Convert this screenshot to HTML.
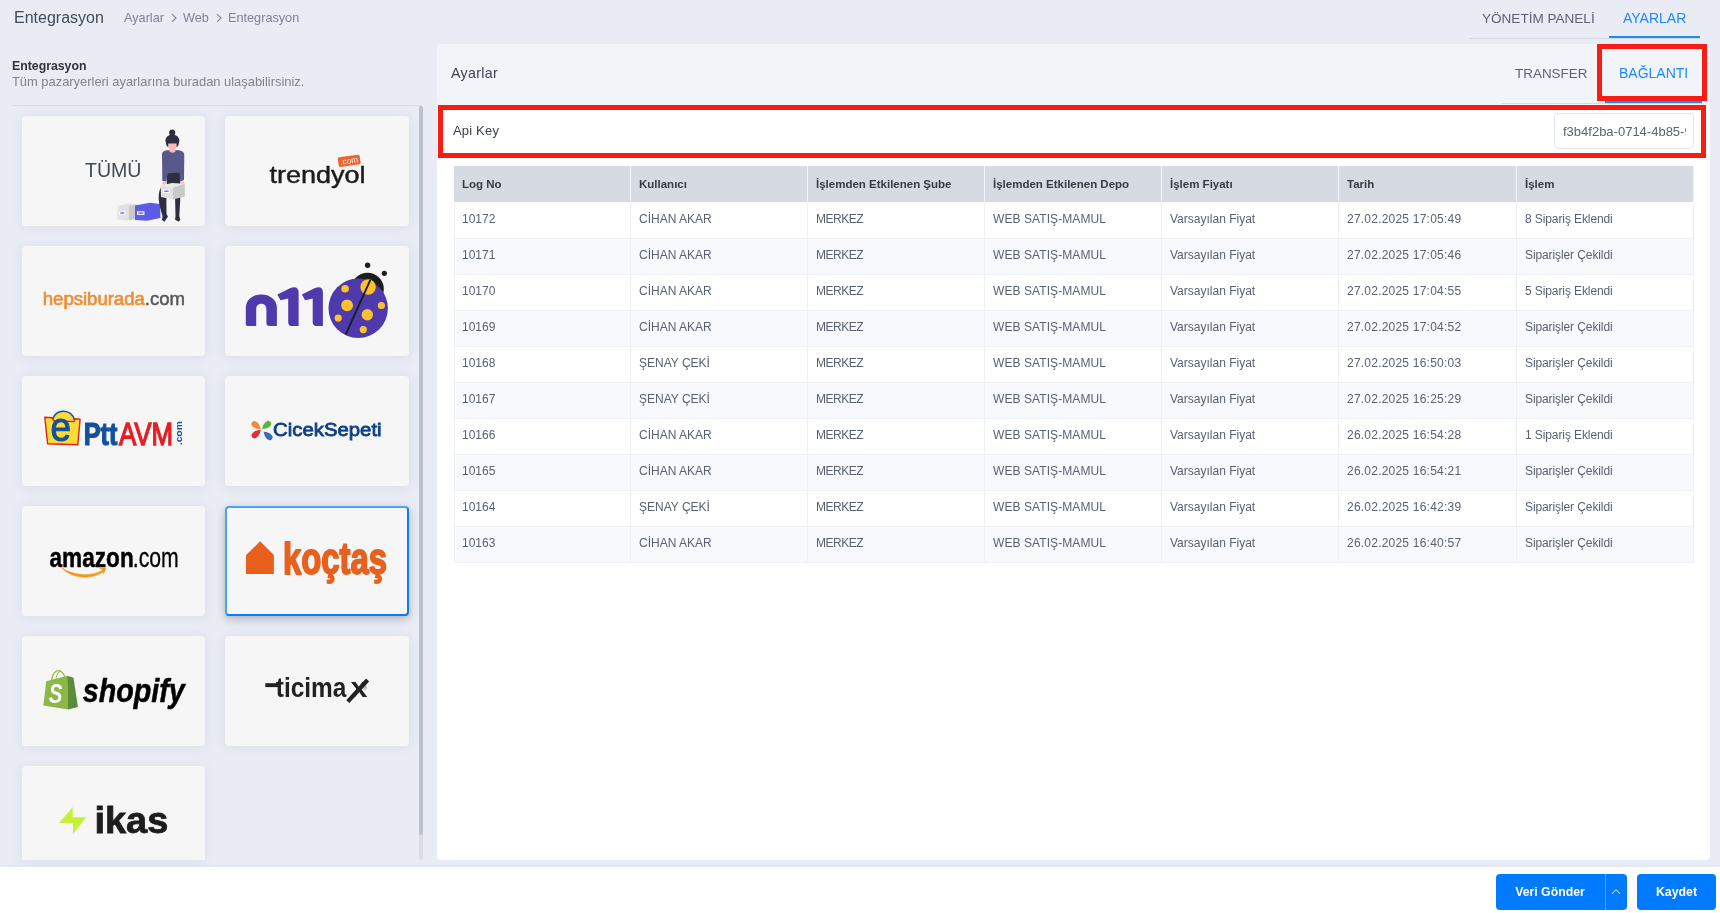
<!DOCTYPE html>
<html lang="tr">
<head>
<meta charset="utf-8">
<title>Entegrasyon</title>
<style>
*{box-sizing:border-box;margin:0;padding:0}
html,body{width:1720px;height:913px;overflow:hidden}
body{background:#e9ecf4;font-family:"Liberation Sans",sans-serif;color:#3f4254;position:relative}
.abs{position:absolute}
.t{position:absolute;white-space:nowrap;line-height:1}
/* top bar */
#title{left:14px;top:10.4px;font-size:16px;color:#414b5a}
.bc{font-size:12.7px;color:#7e8299;top:11.7px}
.toptab{font-size:14px;top:11px;color:#5e6278}
/* left */
.card{position:absolute;width:183px;height:110px;background:#f6f6f6;border-radius:4px;box-shadow:0 1px 12px rgba(150,160,190,.2)}
.card.sel{border:2px solid;border-color:#4ba1fc #0a7cf8 #0a7cf8 #4ba1fc;box-shadow:0 3px 8px rgba(50,55,70,.32)}
/* right panel */
#panel{left:437px;top:44px;width:1273px;height:816px;background:#fff;border-radius:4px;overflow:hidden}
#phead{left:0;top:0;width:1273px;height:61px;background:#f1f4f8}
.red{position:absolute;border:5px solid #f91c14}
table{position:absolute;left:454px;top:166px;width:1240px;border-collapse:separate;border-spacing:0;table-layout:fixed;font-size:12px}
th{height:37px;background:#d6dae2;color:#363b46;font-weight:bold;text-align:left;padding:0 0 0 8px;border-right:1px solid #f1f3f7;border-bottom:1px solid #fff;font-size:11.5px}
td{height:36px;color:#5a6270;padding:0 0 3px 8px;border-right:1px solid #eff2f5;border-bottom:1px solid #eff2f5}
td:first-child{border-left:1px solid #eff2f5;padding-left:7px}
tr:nth-child(odd) td{background:#f8f9fc}
td:nth-child(3){letter-spacing:-.5px}
td:nth-child(6){letter-spacing:.22px}
td:nth-child(7){letter-spacing:-.1px}
td:nth-child(4){letter-spacing:.08px}
/* footer */
#footer{left:0;top:867px;box-shadow:0 -1px 4px rgba(100,110,140,.06);width:1720px;height:46px;background:#fff}
.btn{position:absolute;top:874px;height:36px;background:#007bff;color:#fff;font-weight:bold;font-size:12.3px;border-radius:4px;text-align:center;line-height:37.4px}
</style>
</head>
<body>
<div id="root" style="position:absolute;left:0;top:0;width:1720px;height:913px;will-change:transform">
<!-- TOPBAR -->
<div class="t" id="title">Entegrasyon</div>
<div class="t bc" style="left:124px">Ayarlar</div>
<svg class="abs" style="left:170px;top:12px" width="8" height="12" viewBox="0 0 8 12"><path d="M2,2.2 L6,6 L2,9.8" fill="none" stroke="#7e8299" stroke-width="1.1"/></svg>
<div class="t bc" style="left:183px">Web</div>
<svg class="abs" style="left:215px;top:12px" width="8" height="12" viewBox="0 0 8 12"><path d="M2,2.2 L6,6 L2,9.8" fill="none" stroke="#7e8299" stroke-width="1.1"/></svg>
<div class="t bc" style="left:228px">Entegrasyon</div>
<div class="t toptab" style="left:1482px;font-size:13.55px;margin-top:.6px">YÖNETİM PANELİ</div>
<div class="t toptab" style="left:1623px;color:#1e88ff">AYARLAR</div>
<div class="abs" style="left:1469px;top:38px;width:231px;height:1px;background:#d5d9e3"></div>
<div class="abs" style="left:1609px;top:36px;width:91px;height:2px;background:#1e88ff"></div>
<!-- LEFT -->
<div class="t" style="left:12px;top:60px;font-size:12.3px;color:#2f3440;font-weight:bold">Entegrasyon</div>
<div class="t" style="left:12px;top:76px;font-size:12.9px;color:#80838f">Tüm pazaryerleri ayarlarına buradan ulaşabilirsiniz.</div>
<div class="abs" style="left:12px;top:105px;width:410px;height:1px;background:#d9dde7"></div>
<div id="cards">
<div class="card" style="left:22px;top:116px" id="c1"><svg width="184" height="110" viewBox="0 0 184 110" style="position:absolute;left:0;top:0;overflow:hidden"><text x="63" y="60.7" font-family="Liberation Sans, sans-serif" font-size="19.5" fill="#3d4b57" textLength="56.5" lengthAdjust="spacingAndGlyphs">TÜMÜ</text><g><!-- ground boxes --><polygon points="95.5,90.0 106.0,87.3 115.0,88.5 115.0,102.5 105.0,104.5 95.5,103.5" fill="#e2e2e2"/><polygon points="107.0,90.0 115.0,88.5 115.0,102.5 107.0,104.3" fill="#c9c9c9"/><polygon points="113.0,89.5 128.0,86.8 138.0,88.0 138.5,102.0 125.0,104.8 113.0,104.0" fill="#5c5ce6"/><rect x="97" y="95.30000000000001" width="6.5" height="3.4" fill="#fff"/><rect x="98.3" y="96.30000000000001" width="4" height="1.4" fill="#6c63ff"/><rect x="115" y="95.30000000000001" width="7.5" height="3.6" fill="#fff"/><rect x="116.30000000000001" y="96.4" width="5" height="1.5" fill="#6c63ff"/><!-- legs --><path d="M138.5,72.0 C135.0,80.0 137.0,89.0 140.5,100.0 L140.0,104.0 L142.5,105.8 L146.0,100.5 L144.5,98.0 C144.5,89.0 144.0,82.0 145.0,74.0 Z" fill="#2f2e41"/><path d="M153.0,79.0 L153.5,100.0 L153.0,103.5 L156.5,105.8 L158.3,104.0 L157.3,100.0 L158.5,79.0 Z" fill="#2f2e41"/><!-- skirt --><path d="M145.2,56.0 L158.0,56.0 L158.3,68.0 L144.8,68.0 Z" fill="#2f2e41"/><!-- sweater --><path d="M140.0,38.0 C140.0,35.0 144.0,34.3 147.5,34.0 L154.0,34.0 C158.0,34.3 162.3,35.0 162.3,39.0 L162.0,64.0 L158.3,65.5 L157.6,56.8 L145.4,57.2 L144.5,65.5 L140.3,65.0 Z" fill="#575a89"/><!-- hands --><ellipse cx="142.3" cy="67.30000000000001" rx="2" ry="1.8" fill="#ffb9b9"/><ellipse cx="160.5" cy="67" rx="2" ry="1.8" fill="#ffb9b9"/><!-- held box --><polygon points="138.6,69.5 150.0,67.0 162.7,67.8 151.0,71.5" fill="#e9e9e9"/><polygon points="138.6,69.5 151.0,71.5 151.0,83.5 139.0,81.0" fill="#e2e2e2"/><polygon points="151.0,71.5 162.7,67.8 163.0,80.5 151.0,83.5" fill="#c9c9c9"/><rect x="141" y="73.5" width="7" height="3.4" fill="#fff"/><rect x="142.3" y="74.5" width="4.3" height="1.4" fill="#6c63ff"/><!-- neck/face --><path d="M148.0,31.0 L152.8,31.0 L153.6,35.0 C152.5,37.3 148.3,37.3 147.2,35.0 Z" fill="#ffb9b9"/><ellipse cx="150.4" cy="24.599999999999994" rx="7" ry="6.1" fill="#2f2e41"/><path d="M144.2,25.0 L156.6,25.0 C157.0,28.0 156.3,30.0 155.3,30.8 L145.5,30.8 C144.4,30.0 143.8,28.0 144.2,25.0 Z" fill="#2f2e41"/><path d="M146.2,27.6 L154.6,27.6 L154.6,30.0 C154.6,35.0 146.2,35.0 146.2,30.0 Z" fill="#ffb9b9"/><circle cx="150.2" cy="16.69999999999999" r="3.1" fill="#2f2e41"/></g></svg></div>
<div class="card" style="left:225px;width:184px;top:116px" id="c2"><svg width="184" height="110" viewBox="0 0 184 110" style="position:absolute;left:0;top:0;overflow:hidden"><text x="44.4" y="66.7" font-family="Liberation Sans, sans-serif" font-size="24.3" fill="#1c1c1c" stroke="#1c1c1c" stroke-width="0.45" textLength="96.2" lengthAdjust="spacingAndGlyphs">trendyol</text><g transform="rotate(-8 124.2 44.8)"><rect x="113.2" y="40" width="22" height="9.6" rx="1.5" fill="#f0622b"/><text x="115" y="47.6" font-family="Liberation Sans, sans-serif" font-size="8.5" fill="#fff" textLength="18" lengthAdjust="spacingAndGlyphs">.com</text></g></svg></div>
<div class="card" style="left:22px;top:246px" id="c3"><svg width="184" height="110" viewBox="0 0 184 110" style="position:absolute;left:0;top:0;overflow:hidden"><text x="20.8" y="58.8" font-family="Liberation Sans, sans-serif" font-size="18.6" textLength="142.2" lengthAdjust="spacing"><tspan fill="#f28b30" stroke="#f28b30" stroke-width="0.6">hepsiburada</tspan><tspan fill="#58595b" stroke="#58595b" stroke-width="0.5">.com</tspan></text></svg></div>
<div class="card" style="left:225px;width:184px;top:246px" id="c4"><svg width="184" height="110" viewBox="0 0 184 110" style="position:absolute;left:0;top:0;overflow:hidden"><circle cx="142.6" cy="19.3" r="2.7" fill="#1d1d1b"/><circle cx="159.3" cy="27.3" r="2.6" fill="#1d1d1b"/><circle cx="142.5" cy="43" r="16.3" fill="#1d1d1b"/><circle cx="133.2" cy="62.3" r="29.7" fill="#4f3aad"/><g fill="#fdc12d"><circle cx="143.1" cy="41" r="7.7"/><circle cx="120.1" cy="42.7" r="3.8"/><circle cx="122.1" cy="59.3" r="5.9"/><circle cx="156.4" cy="59.5" r="3.6"/><circle cx="142.3" cy="68.8" r="5.7"/><circle cx="113.2" cy="72.1" r="3.6"/><circle cx="138.3" cy="83.6" r="3.6"/></g><line x1="145.4" y1="33.8" x2="120.8" y2="88.3" stroke="#1d1d1b" stroke-width="1.9"/><g fill="#4f3aad"><path d="M20.8,78 L20.8,62 C20.8,44 51.9,44 51.9,62 L51.9,80 L44.5,80 C42,80 41.4,78.5 41.4,76.5 L41.4,63 C41.4,56 31.2,56 31.2,63 L31.2,80 L24,80 C21.5,80 20.8,79.5 20.8,78 Z"/><path d="M52.3,48.5 L65.5,42 C70,40.3 73.6,41.5 73.6,46 L73.6,80 L67,80 C64,80 63.2,78 63.2,75.5 L63.2,52.5 L55.5,54.3 Z"/><path d="M76.9,48.5 L90,42 C94.5,40.3 97.9,41.5 97.9,46 L97.9,80 L91.5,80 C88.5,80 87.7,78 87.7,75.5 L87.7,52.5 L80.1,54.3 Z"/></g></svg></div>
<div class="card" style="left:22px;top:376px" id="c5"><svg width="184" height="110" viewBox="0 0 184 110" style="position:absolute;left:0;top:0;overflow:hidden"><path d="M31,43 C33,32.5 50,32.5 52.3,44" fill="#fbdc36" stroke="#14509f" stroke-width="1.7"/><polygon points="22.8,41.2 30.5,41.8 31.5,44.5 52,45.5 53,42.8 58.1,43.1 55.8,68.7 25.6,67.7" fill="#fbdc36" stroke="#e0201f" stroke-width="1.4" stroke-linejoin="round"/><path d="M31.8,43.5 C34,34.5 49.5,34.5 51.6,44.6 Z" fill="#fbdc36"/><text x="28.6" y="65" font-family="Liberation Sans, sans-serif" font-size="40" fill="#14509f" stroke="#14509f" stroke-width="1.1" textLength="20.5" lengthAdjust="spacingAndGlyphs">e</text><text x="61.8" y="68.8" font-family="Liberation Sans, sans-serif" font-size="32" font-weight="bold" fill="#14509f" stroke="#14509f" stroke-width="1.2" textLength="33.6" lengthAdjust="spacingAndGlyphs">Ptt</text><text x="97" y="68.8" font-family="Liberation Sans, sans-serif" font-size="30.6" fill="#e21f26" stroke="#e21f26" stroke-width="1.3" textLength="54.2" lengthAdjust="spacingAndGlyphs">AVM</text><text transform="translate(159.6 69.2) rotate(-90)" font-family="Liberation Sans, sans-serif" font-size="8.8" font-weight="bold" fill="#14509f" textLength="24" lengthAdjust="spacingAndGlyphs">.com</text></svg></div>
<div class="card" style="left:225px;width:184px;top:376px" id="c6"><svg width="184" height="110" viewBox="0 0 184 110" style="position:absolute;left:0;top:0;overflow:hidden"><path transform="translate(36.4 53.6) rotate(129)" d="M0,0.8 C2.4,3.8 3.3,6.5 3,9.2 C2.7,12.8 -2.7,12.8 -3,9.2 C-3.3,6.5 -2.4,3.8 0,0.8 Z" fill="#f08c3c"/><path transform="translate(36.4 53.6) rotate(-130)" d="M0,0.8 C2.4,3.8 3.3,6.5 3,9.2 C2.7,12.8 -2.7,12.8 -3,9.2 C-3.3,6.5 -2.4,3.8 0,0.8 Z" fill="#5cb245"/><path transform="translate(36.4 53.6) rotate(50)" d="M0,0.8 C2.4,3.8 3.3,6.5 3,9.2 C2.7,12.8 -2.7,12.8 -3,9.2 C-3.3,6.5 -2.4,3.8 0,0.8 Z" fill="#df2f3b"/><path transform="translate(38.0 55.2) rotate(-48)" d="M0,0.8 C2.4,3.8 3.3,6.5 3,9.2 C2.7,12.8 -2.7,12.8 -3,9.2 C-3.3,6.5 -2.4,3.8 0,0.8 Z" fill="#3b6db4"/><text x="48" y="60.1" font-family="Liberation Sans, sans-serif" font-size="18.8" fill="#0c3f86" stroke="#0c3f86" stroke-width="0.8" textLength="108.6" lengthAdjust="spacingAndGlyphs">CicekSepeti</text></svg></div>
<div class="card" style="left:22px;top:506px" id="c7"><svg width="184" height="110" viewBox="0 0 184 110" style="position:absolute;left:0;top:0;overflow:hidden"><text x="27.5" y="60.6" font-family="Liberation Sans, sans-serif" font-size="27.7" font-weight="bold" fill="#000" stroke="#000" stroke-width="0.5" textLength="84.2" lengthAdjust="spacingAndGlyphs">amazon</text><text x="110.8" y="60.6" font-family="Liberation Sans, sans-serif" font-size="27.7" fill="#000" stroke="#000" stroke-width="0.3" textLength="46" lengthAdjust="spacingAndGlyphs">.com</text><path d="M39.5,61.6 C52,70.3 69,70.6 80.6,64.4 L81.4,65.8 C69,74 50,73 39.5,61.6 Z" fill="#f7941d" stroke="#f7941d" stroke-width="0.6"/><path d="M77.2,62 L84.2,61.7 L81.6,68.6 L80.8,64.4 Z" fill="#f7941d"/></svg></div>
<div class="card sel" style="left:225px;width:184px;top:506px" id="c8"><svg width="184" height="110" viewBox="0 0 184 110" style="position:absolute;left:-2px;top:-2px;overflow:hidden"><polygon points="35.1,35.2 48.9,49.1 48.9,67.9 21,67.9 21,49.1" fill="#e8601c"/><text x="58" y="67.6" font-family="Liberation Sans, sans-serif" font-size="43.8" font-weight="bold" fill="#e8601c" stroke="#e8601c" stroke-width="1.8" stroke-linejoin="round" textLength="104" lengthAdjust="spacingAndGlyphs">koçtaş</text></svg></div>
<div class="card" style="left:22px;top:636px" id="c9"><svg width="184" height="110" viewBox="0 0 184 110" style="position:absolute;left:0;top:0;overflow:hidden"><path d="M29.5,44 C31,37 34,34.3 36.8,34.6 C39.5,34.9 41.6,37.5 42.8,40.8" fill="none" stroke="#95bf47" stroke-width="1.3"/><path d="M34,42.5 C35,37.5 37,35 39,35.2" fill="none" stroke="#95bf47" stroke-width="1.1"/><polygon points="24.3,45.2 45.1,39.8 46.1,73.4 21.3,69.5" fill="#8db849"/><polygon points="45.1,39.8 51.5,41.8 55.9,70.9 46.1,73.4" fill="#5a8c3a"/><text x="26.8" y="66.8" font-family="Liberation Sans, sans-serif" font-size="28" font-weight="bold" font-style="italic" fill="#fff" textLength="13.6" lengthAdjust="spacingAndGlyphs">S</text><text x="60.8" y="66" font-family="Liberation Sans, sans-serif" font-size="32.5" font-weight="bold" font-style="italic" fill="#000" stroke="#000" stroke-width="0.5" textLength="102" lengthAdjust="spacingAndGlyphs">shopify</text></svg></div>
<div class="card" style="left:225px;width:184px;top:636px" id="c10"><svg width="184" height="110" viewBox="0 0 184 110" style="position:absolute;left:0;top:0;overflow:hidden"><rect x="40.3" y="47.2" width="13" height="3.9" fill="#222"/><text y="61.4" font-family="Liberation Sans, sans-serif" font-size="27" font-weight="bold" fill="#222"><tspan x="50.8" textLength="70.6" lengthAdjust="spacingAndGlyphs">ticima</tspan><tspan x="125.6" textLength="17" lengthAdjust="spacingAndGlyphs">x</tspan></text><line x1="122.8" y1="65.6" x2="142.6" y2="44" stroke="#222" stroke-width="4.2"/><text x="138.6" y="54.2" font-family="Liberation Sans, sans-serif" font-size="4.5" fill="#444">®</text></svg></div>
<div class="card" style="left:22px;top:766px;height:94px;border-radius:4px 4px 0 0" id="c11"><svg width="184" height="110" viewBox="0 0 184 110" style="position:absolute;left:0;top:0;overflow:hidden"><polygon points="50.7,41 50.7,51.2 64.2,51.2 51,67.9 51,57 37,57" fill="#c5f135"/><text x="72.4" y="67.3" font-family="Liberation Sans, sans-serif" font-size="37.5" font-weight="bold" fill="#1c1c1c" stroke="#1c1c1c" stroke-width="0.8" textLength="74" lengthAdjust="spacingAndGlyphs">ikas</text></svg></div>
</div>
<div class="abs" style="left:419px;top:106px;width:4px;height:754px;background:#d9dde7;border-radius:2px"></div>
<div class="abs" style="left:419px;top:106px;width:4px;height:729px;background:#bac1cf;border-radius:2px"></div>
<!-- PANEL -->
<div class="abs" id="panel"><div class="abs" id="phead"></div></div>
<div class="t" style="left:451px;top:66px;font-size:14.2px;letter-spacing:.35px;color:#3f4254">Ayarlar</div>
<div class="t toptab" style="left:1515px;top:66.6px;font-size:13.45px">TRANSFER</div>
<div class="t toptab" style="left:1619px;top:66px;color:#1e88ff">BAĞLANTI</div>
<div class="abs" style="left:1501px;top:103px;width:201px;height:1px;background:#d5d9e3"></div>
<div class="abs" style="left:1605px;top:101px;width:97px;height:2px;background:#1e88ff"></div>
<div class="red" style="left:1597px;top:44px;width:110px;height:57px"></div>
<div class="red" style="left:438px;top:105px;width:1268px;height:53px"></div>
<div class="t" style="left:453px;top:124px;font-size:13px;letter-spacing:.18px;color:#3a3f4c">Api Key</div>
<div class="abs" style="left:1554px;top:113px;width:140px;height:36px;border:1px solid #e4e6ef;border-radius:4px;background:#fff;overflow:hidden"><div class="t" style="left:8px;top:11px;font-size:13px;color:#5a6470;width:123px;overflow:hidden">f3b4f2ba-0714-4b85-9c1e</div></div>
<!-- TABLE -->
<table>
<colgroup><col style="width:177px"><col style="width:177px"><col style="width:177px"><col style="width:177px"><col style="width:177px"><col style="width:178px"><col style="width:177px"></colgroup>
<tr><th>Log No</th><th>Kullanıcı</th><th>İşlemden Etkilenen Şube</th><th>İşlemden Etkilenen Depo</th><th>İşlem Fiyatı</th><th>Tarih</th><th>İşlem</th></tr>
<tr><td>10172</td><td>CİHAN AKAR</td><td>MERKEZ</td><td>WEB SATIŞ-MAMUL</td><td>Varsayılan Fiyat</td><td>27.02.2025 17:05:49</td><td>8 Sipariş Eklendi</td></tr>
<tr><td>10171</td><td>CİHAN AKAR</td><td>MERKEZ</td><td>WEB SATIŞ-MAMUL</td><td>Varsayılan Fiyat</td><td>27.02.2025 17:05:46</td><td>Siparişler Çekildi</td></tr>
<tr><td>10170</td><td>CİHAN AKAR</td><td>MERKEZ</td><td>WEB SATIŞ-MAMUL</td><td>Varsayılan Fiyat</td><td>27.02.2025 17:04:55</td><td>5 Sipariş Eklendi</td></tr>
<tr><td>10169</td><td>CİHAN AKAR</td><td>MERKEZ</td><td>WEB SATIŞ-MAMUL</td><td>Varsayılan Fiyat</td><td>27.02.2025 17:04:52</td><td>Siparişler Çekildi</td></tr>
<tr><td>10168</td><td>ŞENAY ÇEKİ</td><td>MERKEZ</td><td>WEB SATIŞ-MAMUL</td><td>Varsayılan Fiyat</td><td>27.02.2025 16:50:03</td><td>Siparişler Çekildi</td></tr>
<tr><td>10167</td><td>ŞENAY ÇEKİ</td><td>MERKEZ</td><td>WEB SATIŞ-MAMUL</td><td>Varsayılan Fiyat</td><td>27.02.2025 16:25:29</td><td>Siparişler Çekildi</td></tr>
<tr><td>10166</td><td>CİHAN AKAR</td><td>MERKEZ</td><td>WEB SATIŞ-MAMUL</td><td>Varsayılan Fiyat</td><td>26.02.2025 16:54:28</td><td>1 Sipariş Eklendi</td></tr>
<tr><td>10165</td><td>CİHAN AKAR</td><td>MERKEZ</td><td>WEB SATIŞ-MAMUL</td><td>Varsayılan Fiyat</td><td>26.02.2025 16:54:21</td><td>Siparişler Çekildi</td></tr>
<tr><td>10164</td><td>ŞENAY ÇEKİ</td><td>MERKEZ</td><td>WEB SATIŞ-MAMUL</td><td>Varsayılan Fiyat</td><td>26.02.2025 16:42:39</td><td>Siparişler Çekildi</td></tr>
<tr><td>10163</td><td>CİHAN AKAR</td><td>MERKEZ</td><td>WEB SATIŞ-MAMUL</td><td>Varsayılan Fiyat</td><td>26.02.2025 16:40:57</td><td>Siparişler Çekildi</td></tr>
</table>
<!-- FOOTER -->
<div class="abs" id="footer"></div>
<div class="btn" style="left:1496px;width:109px;border-radius:4px 0 0 4px;text-indent:-1px">Veri Gönder</div>
<div class="btn" style="left:1605px;width:22px;border-radius:0 4px 4px 0;border-left:1px solid #4ea3ff"><svg style="position:absolute;left:4px;top:12.6px" width="12" height="9" viewBox="0 0 12 9"><path d="M1.9,6.9 L6,2.6 L10.1,6.9" fill="none" stroke="#fff" stroke-width="1"/></svg></div>
<div class="btn" style="left:1637px;width:79px">Kaydet</div>
</div>
</body>
</html>
